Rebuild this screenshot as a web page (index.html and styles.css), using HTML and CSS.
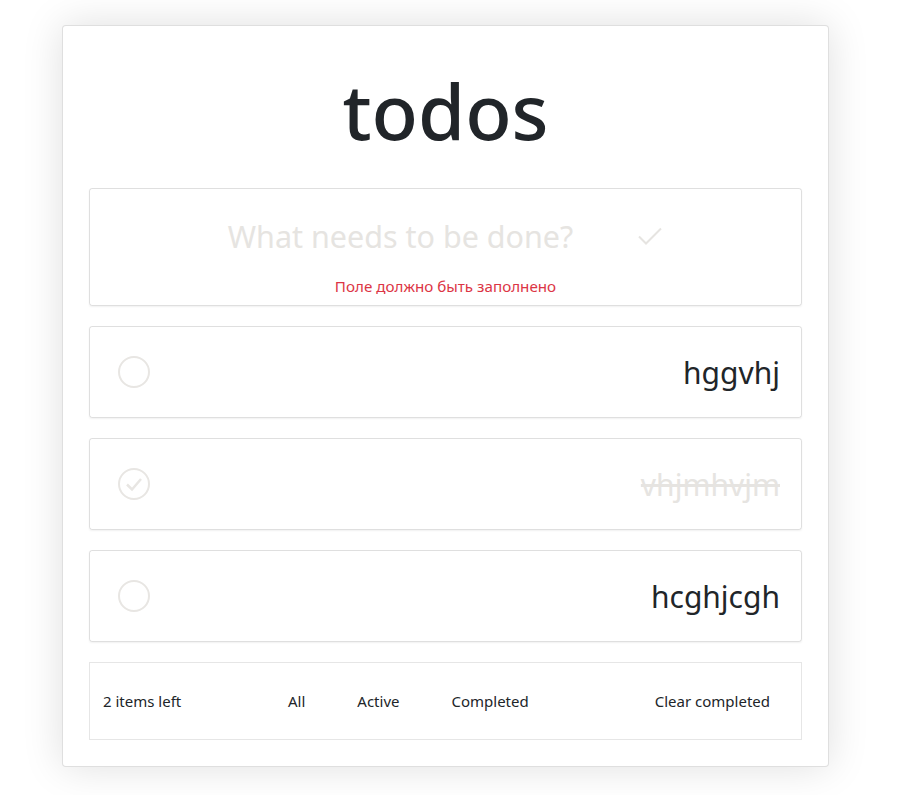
FILE: index.html
```html
<!DOCTYPE html>
<html lang="ru">
<head>
<meta charset="utf-8">
<title>todos</title>
<link rel="stylesheet" href="styles.css">
</head>
<body>
<main class="app">
  <h1 class="title">todos</h1>
  <form class="new-todo">
    <div class="new-row">
      <span class="placeholder">What needs to be done?</span>
      <svg class="submit" width="26" height="20" viewBox="0 0 26 20"><path d="M2 10.5 L9 17.5 L24 2.5" fill="none" stroke="#e6e4e1" stroke-width="2"/></svg>
    </div>
    <p class="error">Поле должно быть заполнено</p>
  </form>
  <ul class="list">
    <li class="item">
      <svg class="toggle" width="34" height="34" viewBox="0 0 34 34"><circle cx="17" cy="17" r="15" fill="none" stroke="#e8e6e3" stroke-width="2"/></svg>
      <span class="label">hggvhj</span>
    </li>
    <li class="item done">
      <svg class="toggle" width="34" height="34" viewBox="0 0 34 34"><circle cx="17" cy="17" r="15" fill="none" stroke="#e8e6e3" stroke-width="2"/><path d="M10 17.5 L15 22.5 L24 12" fill="none" stroke="#e8e6e3" stroke-width="2.5"/></svg>
      <span class="label">vhjmhvjm</span>
    </li>
    <li class="item">
      <svg class="toggle" width="34" height="34" viewBox="0 0 34 34"><circle cx="17" cy="17" r="15" fill="none" stroke="#e8e6e3" stroke-width="2"/></svg>
      <span class="label">hcghjcgh</span>
    </li>
  </ul>
  <footer class="footer">
    <span class="count">2 items left</span>
    <nav class="filters">
      <span>All</span>
      <span>Active</span>
      <span>Completed</span>
    </nav>
    <span class="clear">Clear completed</span>
  </footer>
</main>
</body>
</html>
```

FILE: styles.css
```css
html, body {
  margin: 0;
  padding: 0;
  background: #fff;
}
body {
  font-family: "Segoe UI", "Noto Sans", "Open Sans", sans-serif;
  color: #212529;
  padding: 25px 71px 29px 62px;
}
.app {
  border: 1px solid rgba(0,0,0,.125);
  border-radius: 4px;
  box-shadow: 0 0 40px rgba(0,0,0,.13);
  padding: 0 26px 26px 26px;
  background: #fff;
}
.title {
  margin: 0;
  height: 162px;
  line-height: 120px;
  padding-top: 25px;
  box-sizing: border-box;
  text-align: center;
  font-size: 76px;
  font-weight: 500;
  color: #212529;
  letter-spacing: 0;
}
.new-todo {
  margin: 0;
  height: 118px;
  box-sizing: border-box;
  border: 1px solid rgba(0,0,0,.125);
  border-radius: 3px;
  box-shadow: 0 1px 2px rgba(0,0,0,.06);
  padding-top: 26px;
}
.new-row {
  display: flex;
  justify-content: center;
  align-items: center;
  gap: 64px;
  height: 42px;
}
.placeholder {
  font-size: 30.5px;
  color: #e6e4e1;
  font-weight: 400;
}
.submit { display: block; }
.error {
  margin: 19px 0 0;
  text-align: center;
  font-size: 15.2px;
  color: #dc3545;
}
.list {
  list-style: none;
  margin: 0;
  padding: 0;
}
.item {
  margin-top: 20px;
  height: 92px;
  box-sizing: border-box;
  border: 1px solid rgba(0,0,0,.125);
  border-radius: 3px;
  box-shadow: 0 1px 2px rgba(0,0,0,.06);
  display: flex;
  align-items: center;
  justify-content: space-between;
  padding: 0 21px 0 27px;
}
.toggle { display: block; }
.label {
  font-size: 30px;
  color: #212529;
}
.done .label {
  color: #e6e4e1;
  text-decoration: line-through;
}
.footer {
  margin-top: 20px;
  height: 78px;
  box-sizing: border-box;
  border: 1px solid #e6e6e6;
  display: flex;
  align-items: center;
  padding: 0 31px 0 13px;
  font-size: 15px;
  color: #212529;
}
.count { width: 185px; }
.filters {
  display: flex;
  gap: 52px;
  flex: 1;
}
```
